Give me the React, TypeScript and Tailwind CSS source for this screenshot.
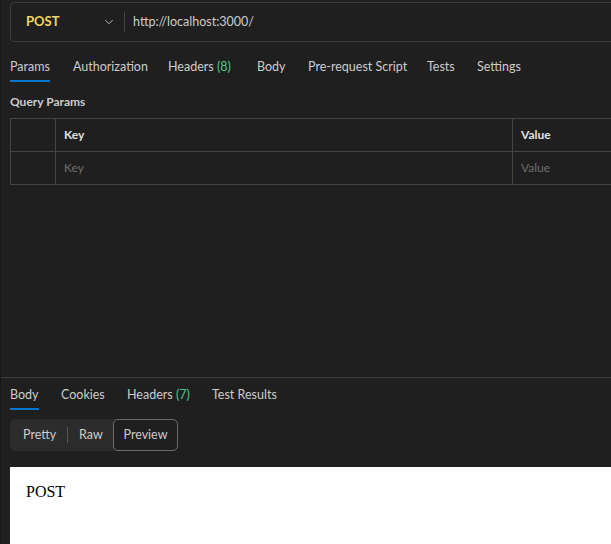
import { ChevronDown } from "lucide-react";

const requestTabs = [
  { label: "Params", w: "w-[63px]", active: true },
  { label: "Authorization", w: "w-[95px]" },
  { label: "Headers", count: "(8)", w: "w-[89px]" },
  { label: "Body", w: "w-[51px]" },
  { label: "Pre-request Script", w: "w-[119px]" },
  { label: "Tests", w: "w-[50px]" },
  { label: "Settings", w: "w-[70px]" },
];

const responseTabs = [
  { label: "Body", w: "w-[51px]", active: true },
  { label: "Cookies", w: "w-[66px]" },
  { label: "Headers", count: "(7)", w: "w-[85px]" },
  { label: "Test Results", w: "w-[90px]" },
];

type Tab = { label: string; w: string; active?: boolean; count?: string };

function TabRow({ tabs, className }: { tabs: Tab[]; className?: string }) {
  return (
    <div className={`flex pl-[9px] ${className ?? ""}`}>
      {tabs.map((t) => (
        <div key={t.label} className={`${t.w} shrink-0 flex`}>
          <div className="flex flex-col">
            <span className="text-[12.5px] leading-[20px] text-[#cccccc] whitespace-nowrap">
              {t.label}
              {t.count && <span className="text-[#4ec98b]"> {t.count}</span>}
            </span>
            <div
              className={`mt-[3px] h-[2px] ${t.active ? "bg-[#0078d4]" : "bg-transparent"}`}
            />
          </div>
        </div>
      ))}
    </div>
  );
}

export default function App() {
  return (
    <div
      className="w-[611px] h-[544px] overflow-hidden bg-[#1f1f1f] flex flex-col border-l border-l-[#181818]"
      style={{ fontFamily: 'Lato, "Noto Sans", sans-serif' }}
    >
      {/* request panel */}
      <div className="flex flex-col h-[377px] shrink-0">
        {/* url bar */}
        <div className="mt-[2px] ml-[9px] -mr-2 h-[40px] flex items-center rounded-[4px] border border-[#3c3c3c]">
          <span className="ml-[15px] w-[76px] text-[13px] font-bold text-[#f0d55e]">
            POST
          </span>
          <ChevronDown className="size-[14px] text-[#cccccc]" strokeWidth={1.5} />
          <div className="ml-[8px] w-px h-[20px] bg-[#444444]" />
          <span className="ml-[8px] text-[12.5px] text-[#cccccc]">
            http://localhost:3000/
          </span>
        </div>

        <TabRow tabs={requestTabs} className="mt-[15px]" />

        <div className="mt-[12px] ml-[9px] text-[12px] font-bold text-[#cccccc] leading-[16px]">
          Query Params
        </div>

        {/* params table */}
        <div className="mt-[8px] ml-[9px] -mr-2 border-t border-l border-[#444444] text-[12px]">
          <div className="flex h-[33px] border-b border-[#444444]">
            <div className="w-[45px] shrink-0 border-r border-[#444444]" />
            <div className="w-[457px] shrink-0 border-r border-[#444444] pl-[8px] flex items-center font-bold text-[#e0e0e0]">
              Key
            </div>
            <div className="flex-1 pl-[8px] flex items-center font-bold text-[#e0e0e0]">
              Value
            </div>
          </div>
          <div className="flex h-[33px] border-b border-[#444444]">
            <div className="w-[45px] shrink-0 border-r border-[#444444]" />
            <div className="w-[457px] shrink-0 border-r border-[#444444] pl-[8px] flex items-center text-[#6e6e6e]">
              Key
            </div>
            <div className="flex-1 pl-[8px] flex items-center text-[#6e6e6e]">
              Value
            </div>
          </div>
        </div>
      </div>

      {/* response panel */}
      <div className="flex-1 flex flex-col border-t border-[#3c3c3c]">
        <TabRow tabs={responseTabs} className="mt-[7px]" />

        <div className="mt-[9px] ml-[9px] flex w-[168px] h-[32px] rounded-[5px] bg-[#2c2c2c] text-[12.5px] text-[#cccccc]">
          <div className="w-[57px] flex items-center pl-[13px]">Pretty</div>
          <div className="my-[8px] w-px bg-[#555555]" />
          <div className="w-[45px] flex items-center pl-[11px]">Raw</div>
          <div className="flex-1 flex items-center justify-center rounded-[5px] border border-[#6b6b6b] bg-[#1f1f1f]">
            Preview
          </div>
        </div>

        <div className="mt-[16px] ml-[9px] flex-1 bg-white pl-[16px] pt-[12px]">
          <span
            className="text-[16px] text-black"
            style={{ fontFamily: '"Liberation Serif", serif' }}
          >
            POST
          </span>
        </div>
      </div>
    </div>
  );
}
